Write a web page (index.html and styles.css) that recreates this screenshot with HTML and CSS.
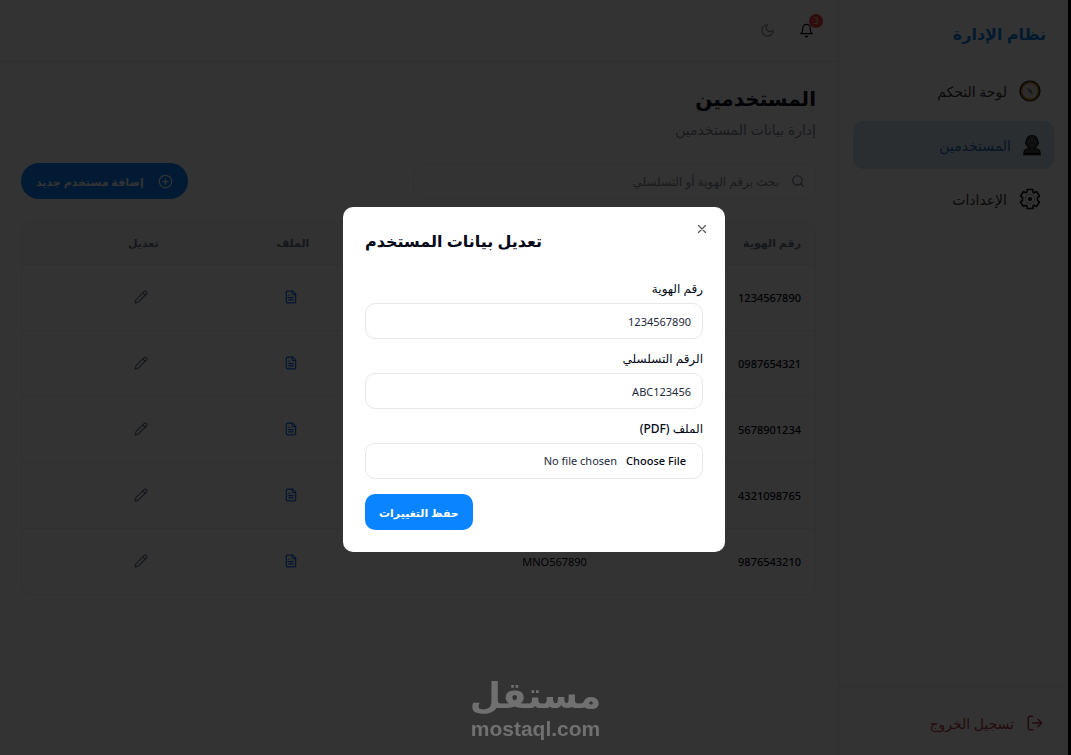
FILE: index.html
```html
<!DOCTYPE html>
<html lang="ar" dir="rtl">
<head>
  <meta charset="utf-8">
  <meta name="viewport" content="width=device-width, initial-scale=1">
  <title>نظام الإدارة</title>
  <link rel="stylesheet" href="styles.css">
</head>

<body>
  <!-- shared icons -->
  <svg class="sprite" aria-hidden="true">
    <symbol id="file" viewBox="0 0 24 24">
      <path d="M15 2H6a2 2 0 0 0-2 2v16a2 2 0 0 0 2 2h12a2 2 0 0 0 2-2V7z"/>
      <path d="M14 2v4a2 2 0 0 0 2 2h4M10 9H8M16 13H8M16 17H8"/>
    </symbol>
    <symbol id="pencil" viewBox="0 0 24 24">
      <path d="M21.2 6.8a2.8 2.8 0 0 0-4-4L3.8 16.2a2 2 0 0 0-.5.8L2 21.4a.5.5 0 0 0 .6.6L7 20.7a2 2 0 0 0 .8-.5z"/>
      <path d="m15 5 4 4"/>
    </symbol>
  </svg>

  <div class="layout">
    <aside class="sidebar">
      <h2 class="brand">نظام الإدارة</h2>
      <nav class="nav">
        <a href="#" class="nav-link">
          <svg width="22" height="22" viewBox="0 0 22 22">
            <circle cx="11" cy="11" r="8.700" fill="#e4ddd4" stroke="#b87420" stroke-width="2"/>
            <circle cx="11" cy="11" r="10" fill="none" stroke="#111" stroke-width="1.200"/>
            <path d="M8 7.500l4.200 2.500 2 4.800-4.200-2.600z" fill="#777"/>
          </svg>
          <span>لوحة التحكم</span>
        </a>
        <a href="#" class="nav-link active">
          <svg width="18" height="22" viewBox="0 0 18 22">
            <path d="M9 1.500c-3.400 0-5.600 2.300-5.600 5.500 0 .8-.9 1-.9 1.900 0 1 1 1.300 1.300 2.100.5 1.300 1.200 2.200 2.200 2.900V15H4c-2 0-3.200 1.700-3.200 5.600h16.400C17.200 16.700 16 15 14 15h-2v-1.100c1-.7 1.700-1.600 2.200-2.900.3-.8 1.300-1.100 1.300-2.100 0-.9-.9-1.100-.9-1.900 0-3.200-2.200-5.500-5.600-5.500z" fill="#444" stroke="#111" stroke-width="1.200"/>
            <path d="M6.500 6.500l-1 3M9 4.500v3M11.500 6.500l1 3M7.500 11h3" stroke="#888" fill="none"/>
            <path d="M1 20h16" stroke="#111" stroke-width="2"/>
          </svg>
          <span>المستخدمين</span>
        </a>
        <a href="#" class="nav-link">
          <svg width="22" height="22" viewBox="0 0 22 22" fill="none" stroke="#111" stroke-width="1.600" stroke-linejoin="round">
            <path d="M8 4V1.500h6V4l1.200.8 2.300-1.300 3 4.500-2 1.500v3l2 1.500-3 4.500-2.300-1.300L14 18v2.500H8V18l-1.200-.8-2.300 1.300-3-4.500 2-1.500v-3L1.500 8l3-4.500 2.300 1.300z"/>
            <circle cx="11" cy="11" r="4.800" stroke="#aaa" stroke-width="1"/>
            <circle cx="11" cy="11" r="1.300" fill="#111"/>
          </svg>
          <span>الإعدادات</span>
        </a>
      </nav>
      <div class="sidebar-footer">
        <a href="#" class="logout">
          <svg class="icon" width="18" height="18" viewBox="0 0 24 24">
            <path d="M9 21H5a2 2 0 0 1-2-2V5a2 2 0 0 1 2-2h4M16 17l5-5-5-5M21 12H9"/>
          </svg>
          <span>تسجيل الخروج</span>
        </a>
      </div>
    </aside>

    <div class="content">
      <header class="topbar">
        <button type="button" class="icon-btn bell" aria-label="الإشعارات">
          <svg class="icon" width="15" height="15" viewBox="0 0 24 24">
            <path d="M6 8a6 6 0 0 1 12 0c0 7 3 9 3 9H3s3-2 3-9M10.300 21a1.940 1.940 0 0 0 3.400 0"/>
          </svg>
          <span class="badge">3</span>
        </button>
        <button type="button" class="icon-btn moon" aria-label="الوضع الليلي">
          <svg class="icon" width="15" height="15" viewBox="0 0 24 24">
            <path d="M12 3a6 6 0 0 0 9 9 9 9 0 1 1-9-9z"/>
          </svg>
        </button>
      </header>

      <main class="main">
        <h1>المستخدمين</h1>
        <p class="subtitle">إدارة بيانات المستخدمين</p>

        <div class="toolbar">
          <div class="search">
            <svg class="icon" width="14" height="14" viewBox="0 0 24 24">
              <circle cx="11" cy="11" r="8"/><path d="m21 21-4.300-4.300"/>
            </svg>
            <input type="search" placeholder="بحث برقم الهوية أو التسلسلي" aria-label="بحث">
          </div>
          <button type="button" class="btn btn-add">
            <svg class="icon" width="15" height="15" viewBox="0 0 24 24">
              <circle cx="12" cy="12" r="10"/><path d="M8 12h8M12 8v8"/>
            </svg>
            إضافة مستخدم جديد
          </button>
        </div>

        <div class="table-wrap">
          <table>
            <colgroup>
              <col class="col-id"><col class="col-serial"><col class="col-action"><col class="col-action">
            </colgroup>
            <thead>
              <tr><th>رقم الهوية</th><th>الرقم التسلسلي</th><th>الملف</th><th>تعديل</th></tr>
            </thead>
            <tbody>
              <tr>
                <td class="id">1234567890</td><td>ABC123456</td>
                <td><button type="button" class="row-btn file" aria-label="الملف"><svg class="icon"><use href="#file"/></svg></button></td>
                <td><button type="button" class="row-btn" aria-label="تعديل"><svg class="icon"><use href="#pencil"/></svg></button></td>
              </tr>
              <tr>
                <td class="id">0987654321</td><td>DEF789012</td>
                <td><button type="button" class="row-btn file" aria-label="الملف"><svg class="icon"><use href="#file"/></svg></button></td>
                <td><button type="button" class="row-btn" aria-label="تعديل"><svg class="icon"><use href="#pencil"/></svg></button></td>
              </tr>
              <tr>
                <td class="id">5678901234</td><td>GHI345678</td>
                <td><button type="button" class="row-btn file" aria-label="الملف"><svg class="icon"><use href="#file"/></svg></button></td>
                <td><button type="button" class="row-btn" aria-label="تعديل"><svg class="icon"><use href="#pencil"/></svg></button></td>
              </tr>
              <tr>
                <td class="id">4321098765</td><td>JKL901234</td>
                <td><button type="button" class="row-btn file" aria-label="الملف"><svg class="icon"><use href="#file"/></svg></button></td>
                <td><button type="button" class="row-btn" aria-label="تعديل"><svg class="icon"><use href="#pencil"/></svg></button></td>
              </tr>
              <tr>
                <td class="id">9876543210</td><td>MNO567890</td>
                <td><button type="button" class="row-btn file" aria-label="الملف"><svg class="icon"><use href="#file"/></svg></button></td>
                <td><button type="button" class="row-btn" aria-label="تعديل"><svg class="icon"><use href="#pencil"/></svg></button></td>
              </tr>
            </tbody>
          </table>
        </div>
      </main>
    </div>
  </div>

  <div class="overlay">
    <div class="modal" role="dialog" aria-modal="true" aria-labelledby="modal-title">
      <button type="button" class="close" aria-label="إغلاق">
        <svg class="icon" width="14" height="14" viewBox="0 0 24 24"><path d="M18 6 6 18M6 6l12 12"/></svg>
      </button>
      <h2 id="modal-title">تعديل بيانات المستخدم</h2>
      <form>
        <div class="field">
          <label for="id-number">رقم الهوية</label>
          <input type="text" id="id-number" value="1234567890">
        </div>
        <div class="field">
          <label for="serial">الرقم التسلسلي</label>
          <input type="text" id="serial" value="ABC123456">
        </div>
        <div class="field">
          <label for="pdf">الملف (PDF)</label>
          <input type="file" id="pdf" accept=".pdf">
        </div>
        <button type="submit" class="btn btn-save">حفظ التغييرات</button>
      </form>
    </div>
  </div>

  <div class="watermark">
    <span class="watermark-ar">مستقل</span>
    <span class="watermark-en">mostaql.com</span>
  </div>
</body>
</html>
```
FILE: styles.css
```css
* {
  box-sizing: border-box;
}

body {
  margin: 0;
  background: #fff;
  color: #020817;
  font-family: "Noto Sans", "DejaVu Sans", sans-serif;
  font-size: 11px;
}

h1, h2, p {
  margin: 0;
}

button, input {
  font-family: inherit;
  font-size: 11px;
}

button {
  border: 0;
  padding: 0;
  background: none;
  cursor: pointer;
}

a {
  text-decoration: none;
}

.sprite {
  display: none;
}

.icon {
  fill: none;
  stroke: currentColor;
  stroke-width: 2;
  stroke-linecap: round;
  stroke-linejoin: round;
}

.layout {
  display: flex;
  min-height: 100vh;
  padding-right: 3px;
}

/* sidebar */
.sidebar {
  display: flex;
  flex-direction: column;
  flex: 0 0 230px;
  border-left: 1px solid #e6eaee;
}

.brand {
  padding: 20px 22px 0;
  color: #0a84e6;
  font-size: 16px;
  line-height: 28px;
}

.nav {
  display: flex;
  flex-direction: column;
  flex: 1;
  gap: 6px;
  padding: 19px 14px;
}

.nav-link {
  display: flex;
  align-items: center;
  gap: 12px;
  height: 48px;
  padding: 0 13px;
  border-radius: 10px;
  color: #333;
  font-size: 14px;
}

.nav-link.active {
  background: #d0e4f2;
  color: #2a6cb8;
}

.sidebar-footer {
  padding: 26px 24px 22px;
  border-top: 1px solid #e6eaee;
}

.logout {
  display: flex;
  align-items: center;
  gap: 12px;
  height: 20px;
  color: #b83a48;
  font-size: 14px;
}

/* top bar */
.content {
  flex: 1;
  min-width: 0;
}

.topbar {
  display: flex;
  align-items: center;
  gap: 24px;
  height: 62px;
  padding: 0 24px;
  border-bottom: 1px solid #e6eaee;
}

.icon-btn {
  position: relative;
  display: flex;
  color: #020817;
}

.moon {
  color: #8a929e;
}

.badge {
  position: absolute;
  top: -9px;
  right: -9px;
  width: 14px;
  height: 14px;
  border-radius: 50%;
  background: #ef4444;
  color: #fbd0d0;
  font-size: 9px;
  line-height: 14px;
  text-align: center;
}

/* page */
.main {
  padding: 21px 22px 40px 21px;
}

h1 {
  font-size: 20px;
  line-height: 32px;
}

.subtitle {
  margin-top: 5px;
  color: #7c8694;
  font-size: 14px;
  line-height: 20px;
}

.toolbar {
  display: flex;
  align-items: center;
  justify-content: space-between;
  margin-top: 23px;
}

.search {
  display: flex;
  align-items: center;
  gap: 12px;
  width: 403px;
  height: 36px;
  padding: 0 10px;
  border: 1px solid #e9edf1;
  border-radius: 10px;
  color: #64748b;
}

.search input {
  flex: 1;
  min-width: 0;
  border: 0;
  outline: 0;
  padding: 0;
  background: none;
  font-size: 12px;
}

.search input::placeholder {
  color: #7c8694;
}

.btn {
  height: 36px;
  padding: 0 14px;
  border-radius: 10px;
  background: #0a84ff;
  color: #fff;
  font-weight: 600;
}

.btn-add {
  display: flex;
  align-items: center;
  gap: 14px;
  padding: 0 15px;
  border-radius: 18px;
}

.table-wrap {
  margin-top: 22px;
  border: 1px solid #e9edf1;
  border-radius: 10px;
  overflow: hidden;
}

table {
  width: 100%;
  table-layout: fixed;
  border-collapse: collapse;
}

.col-id {
  width: 27%;
}

.col-serial {
  width: 35%;
}

.col-action {
  width: 19%;
}

th {
  height: 42px;
  padding: 0 14px;
  background: #fafafa;
  color: #64748b;
  font-weight: 600;
  text-align: right;
}

td {
  height: 66px;
  padding: 0 14px;
  border-top: 1px solid #e9edf1;
}

.id {
  font-weight: 500;
}

.row-btn {
  display: flex;
  align-items: center;
  justify-content: center;
  width: 36px;
  height: 36px;
  color: #64748b;
}

.row-btn.file {
  color: #0a6cf0;
}

.row-btn .icon {
  width: 14px;
  height: 14px;
}

/* dialog */
.overlay {
  position: fixed;
  inset: 0;
  display: flex;
  align-items: center;
  justify-content: center;
  padding-top: 4px;
  border-right: 3px solid #000;
  background: rgba(0, 0, 0, 0.8);
}

.modal {
  position: relative;
  width: 100%;
  max-width: 382px;
  padding: 22px;
  border-radius: 10px;
  background: #fff;
}

.close {
  position: absolute;
  top: 15px;
  right: 16px;
  display: flex;
  color: #555;
}

.modal h2 {
  margin-bottom: 28px;
  font-size: 16px;
  line-height: 24px;
  text-align: left;
}

.field {
  margin-bottom: 12px;
}

.field label {
  display: block;
  margin-bottom: 6px;
  font-size: 12px;
  font-weight: 500;
  line-height: 16px;
}

.field input {
  display: block;
  width: 100%;
  height: 36px;
  padding: 0 11px;
  border: 1px solid #e5e9ed;
  border-radius: 10px;
  background: #fff;
  color: #1e293b;
}

.field input[type="file"] {
  padding: 0 16px;
  line-height: 34px;
}

.field input::file-selector-button {
  margin: 0 0 0 9px;
  border: 0;
  padding: 0;
  background: none;
  color: #020817;
  font-family: inherit;
  font-size: 11px;
  font-weight: 500;
}

.btn-save {
  display: block;
  margin-top: 15px;
  margin-right: auto;
}

/* watermark */
.watermark {
  position: fixed;
  right: 0;
  bottom: 14px;
  left: 0;
  display: flex;
  flex-direction: column;
  align-items: center;
  color: #707070;
  font-weight: bold;
  pointer-events: none;
}

.watermark-ar {
  font-family: "DejaVu Sans", sans-serif;
  font-size: 36px;
  line-height: 42px;
}

.watermark-en {
  font-family: "Liberation Sans", Arial, sans-serif;
  font-size: 21px;
  line-height: 24px;
}
```
